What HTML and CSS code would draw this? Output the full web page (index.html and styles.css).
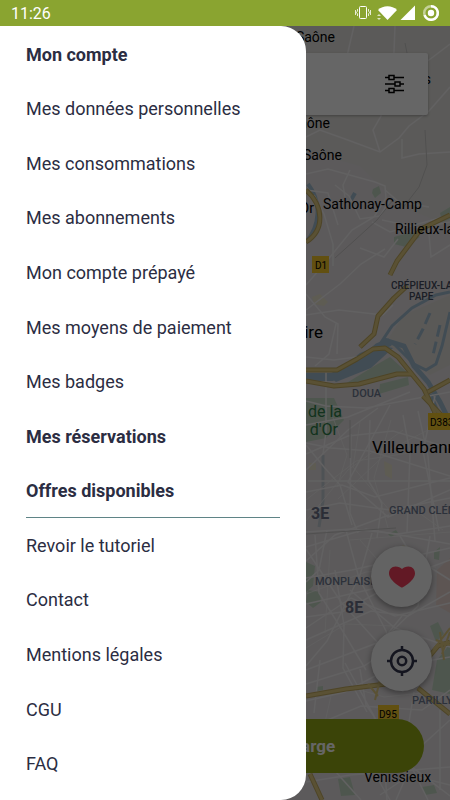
FILE: index.html
```
<!DOCTYPE html>
<html lang="fr">

<head>
    <meta charset="UTF-8">
    <meta name="viewport" content="width=device-width, initial-scale=1.0">
    <title>Mon compte</title>
    <link rel="stylesheet" href="styles.css">
</head>

<body>
    <header class="status-bar">
        <time>11:26</time>
        <div class="status-icons">
            <svg width="16" height="16" viewBox="0 0 16 16" fill="none" stroke="#fff">
                <rect x="4.5" y="1.5" width="7" height="12" rx="1" />
                <path d="M2.5 4v2l-1 1.500 1 1.500v2M.5 5v5M13.500 4v2l1 1.500-1 1.500v2M15.500 5v5" stroke-width=".8" />
            </svg>
            <svg width="20" height="16" viewBox="0 0 20 16" fill="#fff">
                <path d="M1 5C6 0 15 0 20 5L10.500 15z" />
                <path d="M0 11l2-2 2 2zM0 13h4l-2 2z" opacity=".7" />
            </svg>
            <svg width="16" height="16" viewBox="0 0 16 16" fill="#fff">
                <path d="M15 .5v14.500H.5z" />
            </svg>
            <svg class="icon-ring" width="18" height="18" viewBox="0 0 18 18" fill="none" stroke="#fff" stroke-width="2.500">
                <circle cx="9" cy="9" r="6.800" opacity=".5" />
                <path d="M9 2.200a6.800 6.800 0 1 1-6.400 9" />
                <circle cx="9" cy="9" r="3.200" fill="#fff" stroke="none" />
            </svg>
        </div>
    </header>

    <div class="screen">
        <!-- carte -->
        <svg class="map" viewBox="0 26 450 774" preserveAspectRatio="xMaxYMin slice">
            <rect y="26" width="450" height="774" fill="#e5e1e3" />
            <path d="M290 26h160v200l-50-20-40-40-70-20z" fill="#e4e2de" />
            <path d="M384 345l20-30 46-20v70l-20 10-22-20z" fill="#e2deda" />
            <path d="M437 570l13-12v55l-14-8z" fill="#e8d5d0" />

            <g fill="#c3d8c3">
                <path d="M373 189l6-3 2 7-6 5-3-5z" />
                <path d="M394 237l18-5 8 5-14 10-12-3z" />
                <path d="M440 213l10-6v12l-8 3z" />
                <path d="M340 387l36-22 14-8 20 18-30 1z" />
                <path d="M306 398h28l10 22-18 18-20 4z" />
                <path d="M380 384l28-7 1 8-30 9z" />
                <path d="M306 562l9 4-2 20-7 6zM308 590l12 2 1 10-8 6-7-6z" />
                <path d="M434 552l6-5-1 13-5-1zM430 626l8-4 6 12-8 8z" />
                <path d="M437 660l13-16v50l-18-4z" />
                <path d="M338 779l12-2 5 18-14 1zM422 787l12-2 3 8-12 2z" />
                <path d="M388 534l8-4 2 3-7 4zM316 687l7-1v4l-6 1z" />
            </g>
            <g fill="#ece5cf">
                <path d="M312 297l8-3 8 8-4 4-10-2z" />
                <path d="M384 461l8 4v14l-7-4zM309 463h7v7h-7zM402 545l6 1v7l-5-2z" />
            </g>

            <!-- fleuve -->
            <g fill="none" stroke="#a3bfd2">
                <path d="M306 377h26l28-14 18-16 12-5" stroke-width="8" />
                <path d="M330 377l30-24 20-8 13 3-22 20-35 14z" fill="#a3bfd2" stroke="none" />
                <path d="M384 340l20 6 10 20 14 16 12 20 10 20" stroke-width="5" />
                <path d="M380 344l12-18 20-18 24-13 14-3M392 342l22 22 12 6 10-6 6-18 8-34" stroke-width="3" />
                <path d="M430 313l-7 16-8 15M440 325l-7 30" stroke-width="3" stroke-dasharray="12 5" />
                <path d="M308 184c14 18 12 42-2 58M355 193l-4 7M430 394l12 28" stroke-width="4" />
                <path d="M323 455v46l-4 26" stroke-width="3" stroke="#c3ccd4" />
            </g>

            <!-- rues -->
            <g fill="none" stroke="#f5f3f4" stroke-width="1.500">
                <path d="M395 26l-2 51M405 77l28-20 17-13M450 222l-30 6-38-8" />
                <path d="M306 137l14-7 25 9 35 13 19-14 10-12 20-15 21-24M380 152l-7-22 8-14-2-30M354 26l-7 30" />
                <path d="M402 139v19l17-4 31-2M306 174l22-5 47 13 10 4 1 12-12 19-22 13-26 32-20 23M306 190l22 3 10 32M335 185l14 11 11 23 20-3 10-16" />
                <path d="M314 195l10 19 9 30v22M350 170l-7 15 2 12M385 190l14 12 30 5M372 222l18 10 60-17M360 248l24 9 14-18M428 223l3 34 19-12" />
                <path d="M306 310l34-26 21-20 24-15M306 294l19 23 13 7-1 30M306 315l33-5 44 5 10-10M336 324l-7 30-14 12M306 357l28 3 30-4" />
                <path d="M326 372v60l-3 22M306 401l20 5 40 2 84-16M306 425l42-8 62-25M306 443l25 5 39 3 80 25M306 454l42-18 45-5 57 17" />
                <path d="M308 481h142M306 492l36-7 33 12 75-19M306 510l34-7 50 7 60-12M306 532l46-3 46 5 52-8" />
                <path d="M351 434l-1 79 8 20M370 420l-2 60 14 23-5 35M403 415l7 38-3 80M418 411l10 45 7 85M435 396l-12 55 16 80" />
                <path d="M306 445l18 22 16 18 12 40M306 470l42-40 30-22M390 405l-42 77 40 35 62-27" />
                <path d="M306 547l60-18 84 15M306 561l29-26 54-20M306 578l46-8 98-22M306 604l66-15 78-29M306 617l36-5 55-30" />
                <path d="M327 530l-8 40-13 12M346 530l13 48 27 53 17 61M372 533l-12 42-33 66-21 25M400 536l12 20 38 24" />
                <path d="M306 549l35 53 38 42 19 25M306 628l45-30 44 18 55-13M306 640l65-29 37 5 42-24M306 670l76-29 20-25" />
                <path d="M315 535l4 58 23 37 24 40M335 570l9 55-1 43 24 44M350 590l45 38 55 19M430 536l-12 70-46 45" />
                <path d="M306 684l58-18 37-25M306 701l39-9 47-25 58-10M345 663l29 53 4 25 72 55M360 669l6 36 16 23 5 72" />
                <path d="M320 660l-6 53M306 729l55-23 61 4 28-20M414 692l-10 60 24 48M450 720l-32 29-22 51M306 782l44-7 100-8M335 771l26 29M375 774l15 26M450 785l-40-10-30 20M440 710v80" />
            </g>
            <g fill="none" stroke="#f5f3f4" stroke-width=".7">
                <path d="M332 415l15 40-10 32M360 422l-7 45 37 44M391 420l-17 58 14 50M430 429l-39 20-53 50M306 500l50-39 53-8M306 521l42-51 55-40M350 540l100-8M408 505l35 25M306 594l60-22 70-5M330 550l-5 83M306 648l40-24 48 2M360 540l40 45M331 696l-8 35M350 687l34 10 46-5M307 747l35-20M360 722l45 40" />
            </g>
            <g fill="none" stroke="#c9c7c7">
                <path d="M405 43l7 35M425 130l2 35-8 22-17 22M393 200l-16 20-22 20-20 18M350 420v38M306 534l90-6" />
            </g>

            <!-- grands axes -->
            <g fill="none" stroke-linejoin="round">
                <g stroke="#c2aa60" stroke-width="5">
                    <path d="M306 370h31l20-11 16-10 12-1 13 9 26 32 12 26" />
                    <path d="M306 381l28 5 25-2 38-10h14M360 347l14-13 4-18 16-18 13-12M390 275l7-14 24-32 29-14" />
                    <path d="M306 190c18 16 19 40 0 52" />
                    <path d="M428 392l22-12M423 396l27 28M306 696l40-7 40-5M428 658l10-12 12-4M418 688l32 26M310 774l12 26" />
                </g>
                <g stroke="#e0cb82" stroke-width="3">
                    <path d="M306 370h31l20-11 16-10 12-1 13 9 26 32 12 26" />
                    <path d="M306 381l28 5 25-2 38-10h14M360 347l14-13 4-18 16-18 13-12M390 275l7-14 24-32 29-14" />
                    <path d="M306 190c18 16 19 40 0 52" />
                    <path d="M428 392l22-12M423 396l27 28M306 696l40-7 40-5M428 658l10-12 12-4M418 688l32 26M310 774l12 26" />
                </g>
                <path d="M433 650l17-22M436 640l14 5M440 632l4 28M450 632l-8 22M368 684l10 12M380 680l-5 20" stroke="#e0cb82" stroke-width="2" />
            </g>

            <!-- numéros de route -->
            <g class="road">
                <rect x="312" y="256" width="17" height="17" />
                <text x="315" y="269">D1</text>
                <rect x="428" y="413" width="26" height="17" />
                <text x="430" y="426">D383</text>
                <rect x="378" y="705" width="21" height="17" />
                <text x="379" y="718">D95</text>
            </g>

            <g class="town">
                <text x="335" y="42" text-anchor="end">Saône</text>
                <text x="330" y="128" text-anchor="end">Saône</text>
                <text x="342" y="160" text-anchor="end">Saône</text>
                <text x="431" y="84" text-anchor="end">Echets</text>
                <text x="314" y="213" text-anchor="end">d'Or</text>
                <text x="323" y="209">Sathonay-Camp</text>
                <text x="395" y="234">Rillieux-la-Pape</text>
                <text x="364" y="782">Vénissieux</text>
            </g>
            <g class="city">
                <text x="323" y="338" text-anchor="end">Caluire</text>
                <text x="372" y="453">Villeurbanne</text>
            </g>
            <g class="park">
                <text x="342" y="417" text-anchor="end">Parc de la</text>
                <text x="338" y="435" text-anchor="end">Tête d'Or</text>
            </g>
            <g class="quarter">
                <text x="352" y="397">DOUA</text>
                <text x="389" y="514">GRAND CLÉMENT</text>
                <text x="315" y="585">MONPLAISIR</text>
                <text x="412" y="704">PARILLY</text>
            </g>
            <g class="suburb">
                <text x="391" y="289">CRÉPIEUX-LA</text>
                <text x="409" y="300">PAPE</text>
            </g>
            <g class="district">
                <text x="311" y="519">3E</text>
                <text x="345" y="613">8E</text>
            </g>
        </svg>

        <!-- commandes de la carte -->
        <main class="controls">
            <div class="search">
                <button class="btn-filter" aria-label="Filtres">
                    <svg width="20" height="20" viewBox="0 0 20 20" fill="none" stroke="#000" stroke-width="1.500">
                        <path d="M0 3.500h4M9 3.500h10M0 10h10M15 10h4M0 16.500h4M9 16.500h10" />
                        <rect x="4" y="1.500" width="5" height="4" />
                        <rect x="10" y="8" width="5" height="4" />
                        <rect x="4" y="14.500" width="5" height="4" />
                    </svg>
                </button>
            </div>
            <button class="btn-round" aria-label="Favoris">
                <svg width="28" height="24" viewBox="0 0 28 24">
                    <path d="M14 22.500C12.500 22.500 1 15 1 8.500 1 4.500 3.500 1.500 7.500 1.500c3 0 5 1 6.500 2.500 1.500-1.500 3.500-2.500 6.500-2.500 4 0 6.500 3 6.500 7 0 6.500-11.500 14-13 14z" fill="#f5405c" />
                </svg>
            </button>
            <button class="btn-round" aria-label="Ma position">
                <svg width="32" height="32" viewBox="0 0 32 32" fill="none" stroke="#33364f" stroke-width="2.500">
                    <circle cx="16" cy="16" r="11" />
                    <circle cx="16" cy="16" r="4.200" />
                    <path d="M16 1v5M16 26v5M1 16h5M26 16h5" />
                </svg>
            </button>
            <button class="btn-charge">Trouver un point de recharge</button>
        </main>

        <div class="overlay"></div>

        <!-- menu -->
        <nav class="drawer">
            <a class="title" href="#">Mon compte</a>
            <a href="#">Mes données personnelles</a>
            <a href="#">Mes consommations</a>
            <a href="#">Mes abonnements</a>
            <a href="#">Mon compte prépayé</a>
            <a href="#">Mes moyens de paiement</a>
            <a href="#">Mes badges</a>
            <a class="title" href="#">Mes réservations</a>
            <a class="title line" href="#">Offres disponibles</a>
            <a href="#">Revoir le tutoriel</a>
            <a href="#">Contact</a>
            <a href="#">Mentions légales</a>
            <a href="#">CGU</a>
            <a href="#">FAQ</a>
        </nav>
    </div>
</body>

</html>
```
FILE: styles.css
```
* {
    box-sizing: border-box;
}

body {
    margin: 0;
    min-height: 100vh;
    display: flex;
    flex-direction: column;
    font-family: Roboto, "Liberation Sans", sans-serif;
}

button {
    border: 0;
    padding: 0;
    font-family: inherit;
    cursor: pointer;
}

/******************** barre d'état ***********************/

.status-bar {
    display: flex;
    align-items: center;
    justify-content: space-between;
    height: 26px;
    padding: 0 10px 0 11px;
    background: #8aa430;
    color: #fff;
    font-size: 16px;
}

.status-icons {
    display: flex;
    align-items: center;
    gap: 3px;
}

.status-icons svg:first-child {
    margin-right: 3px;
}

.icon-ring {
    margin-left: 3px;
}

/******************** écran : couches superposées ***********************/

.screen {
    flex: 1;
    display: grid;
    grid-template: 1fr / 1fr;
    overflow: hidden;
}

.map,
.controls,
.overlay,
.drawer {
    grid-area: 1 / 1;
}

.overlay {
    background: rgba(0, 0, 0, 0.6);
}

/******************** carte ***********************/

.map {
    width: 100%;
    height: 100%;
    min-height: 0;
}

.town {
    font-size: 14px;
}

.city {
    font-size: 17px;
}

.park {
    font-size: 16px;
    fill: #2f7d4a;
}

.quarter {
    font-size: 11px;
    font-weight: 500;
    fill: #6f7a92;
}

.suburb {
    font-size: 10px;
    font-weight: 500;
    fill: #454c60;
}

.district {
    font-size: 16px;
    font-weight: 700;
    fill: #6b7287;
}

.road {
    font-size: 10px;
}

.road rect {
    fill: #f5c82c;
}

/******************** commandes ***********************/

.controls {
    display: flex;
    flex-direction: column;
    align-items: flex-end;
    padding: 27px 18px 27px 22px;
}

.search {
    display: flex;
    align-items: center;
    justify-content: flex-end;
    width: 100%;
    height: 62px;
    margin-right: 4px;
    margin-bottom: auto;
    padding-right: 23px;
    border-radius: 2px;
    background: #fff;
    box-shadow: 0 1px 3px rgba(0, 0, 0, 0.3);
}

.btn-filter {
    display: flex;
    background: none;
}

.btn-round {
    display: flex;
    align-items: center;
    justify-content: center;
    width: 61px;
    height: 61px;
    margin-bottom: 23px;
    border-radius: 50%;
    background: #f8f8f8;
    box-shadow: 0 2px 6px rgba(0, 0, 0, 0.4);
}

.btn-charge {
    align-self: stretch;
    height: 54px;
    margin: 5px 8px 0 4px;
    border-radius: 27px;
    background: #93ab14;
    color: #fff;
    font-size: 17px;
    font-weight: 700;
}

/******************** menu ***********************/

.drawer {
    display: grid;
    grid-auto-rows: 1fr;
    z-index: 1;
    width: 68%;
    padding: 1px 26px 9px;
    border-radius: 0 25px 25px 0;
    background: #fff;
}

.drawer a {
    display: flex;
    align-items: center;
    min-height: 44px;
    color: #2b2d42;
    font-size: 18px;
    text-decoration: none;
}

.drawer .title {
    font-weight: 700;
}

.drawer .line {
    border-bottom: 1px solid #5f8486;
}
```
